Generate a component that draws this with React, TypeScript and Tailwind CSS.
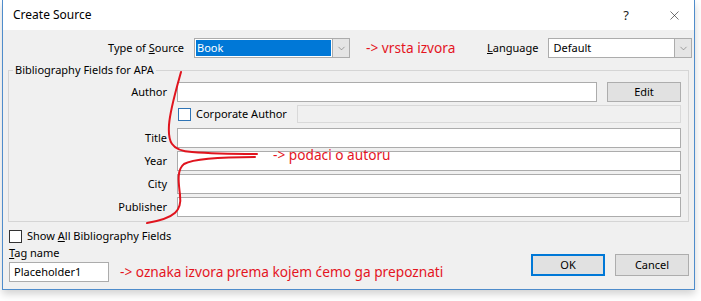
import { X, ChevronDown } from "lucide-react";

const font = { fontFamily: '"Noto Sans", "Liberation Sans", sans-serif' };

function DropArrow() {
  return (
    <div className="flex h-full w-[17px] items-center justify-center border-l border-[#acacac] bg-[#e5e5e5]">
      <ChevronDown className="h-[11px] w-[11px] text-[#606060]" strokeWidth={1.2} />
    </div>
  );
}

function TextBox({ className = "", children }: { className?: string; children?: React.ReactNode }) {
  return (
    <div className={`flex h-[20px] items-center border border-[#acacac] bg-white px-[4px] ${className}`}>
      {children}
    </div>
  );
}

function FieldRow({ label, top }: { label: string; top: string }) {
  return (
    <div className={`flex items-center ${top}`}>
      <div className="w-[159px] pr-[1px] text-right">{label}</div>
      <TextBox className="ml-[9px] w-[504px]" />
    </div>
  );
}

function CheckBox({ className = "border-[#333]" }: { className?: string }) {
  return <div className={`h-[13px] w-[13px] shrink-0 border bg-white ${className}`} />;
}

export default function App() {
  return (
    <div
      className="relative h-[301px] w-[701px] overflow-hidden bg-white text-[11px] leading-[16px] text-black"
      style={font}>
      <div className="ml-[2px] w-[693px] border-x border-b border-[#4f8ccb] shadow-[0_4px_8px_rgba(0,0,0,0.18)]">
        {/* title bar */}
        <div className="flex h-[30px] items-center bg-white pl-[10px] pr-[12px]">
          <span className="text-[12px]">Create Source</span>
          <span className="ml-auto mr-[38px] text-[13px] text-[#222]">?</span>
          <X className="h-[15px] w-[15px] text-[#222]" strokeWidth={1} />
        </div>

        {/* body */}
        <div className="h-[259px] bg-[#f0f0f0] pt-[8px]">
          <div className="flex h-[20px] items-center">
            <div className="w-[181px] text-right">
              Type of <span className="underline">S</span>ource
            </div>
            <div className="ml-[10px] flex h-[20px] w-[156px] border border-[#acacac] bg-white">
              <div className="m-[1px] flex flex-1 items-center bg-[#0078d7] pl-[1px] text-white">Book</div>
              <DropArrow />
            </div>
            <div className="ml-[16px] w-[121px] text-[13.7px] text-[#e4151f]">-&gt; vrsta izvora</div>
            <div>
              <span className="underline">L</span>anguage
            </div>
            <div className="ml-[10px] flex h-[20px] w-[144px] border border-[#acacac] bg-white">
              <div className="flex flex-1 items-center pl-[4px]">Default</div>
              <DropArrow />
            </div>
          </div>

          <fieldset className="ml-[5px] mt-[4px] w-[681px] border border-[#d5d5d5] pb-[4px]">
            <legend className="ml-[4px] px-[2px]">Bibliography Fields for APA</legend>
            <div className="flex items-center pt-[4px]">
              <div className="w-[159px] pr-[1px] text-right">Author</div>
              <TextBox className="ml-[9px] w-[420px]" />
              <div className="ml-[10px] flex h-[20px] w-[74px] items-center justify-center border border-[#adadad] bg-[#e1e1e1]">
                Edit
              </div>
            </div>
            <div className="mt-[3px] flex h-[18px] items-center">
              <div className="ml-[169px]">
                <CheckBox className="border-[#2f74b5]" />
              </div>
              <span className="ml-[5px] whitespace-nowrap">Corporate Author</span>
              <div className="ml-auto mr-[7px] h-[18px] w-[384px] border border-[#d9d9d9] bg-[#f0f0f0]" />
            </div>
            <FieldRow label="Title" top="mt-[5px]" />
            <FieldRow label="Year" top="mt-[3px]" />
            <FieldRow label="City" top="mt-[3px]" />
            <FieldRow label="Publisher" top="mt-[3px]" />
          </fieldset>

          <div className="flex items-end pl-[6px] pr-[5px]">
            <div>
              <div className="mt-[6px] flex items-center">
                <CheckBox />
                <span className="ml-[5px]">
                  Show <span className="underline">A</span>ll Bibliography Fields
                </span>
              </div>
              <div className="mt-[1px]">
                <span className="underline">T</span>ag name
              </div>
              <div className="mt-[1px] flex items-center">
                <TextBox className="w-[100px]">Placeholder1</TextBox>
                <span className="ml-[11px] text-[13.7px] text-[#e4151f]">
                  -&gt; oznaka izvora prema kojem ćemo ga prepoznati
                </span>
              </div>
            </div>
            <div className="mb-[6px] ml-auto flex gap-[10px]">
              <div className="flex h-[22px] w-[74px] items-center justify-center border-2 border-[#0078d7] bg-[#e1e1e1]">
                OK
              </div>
              <div className="flex h-[22px] w-[74px] items-center justify-center border border-[#adadad] bg-[#e1e1e1]">
                Cancel
              </div>
            </div>
          </div>
        </div>
      </div>

      {/* hand-drawn annotation */}
      <svg className="pointer-events-none absolute left-0 top-0" width="701" height="301">
        <path
          d="M181 72 C176 90, 170 110, 169 125 C168 140, 170 151, 192 152 C215 154, 240 154, 257 154"
          fill="none"
          stroke="#e0141e"
          strokeWidth="2"
          strokeLinecap="round"
        />
        <path
          d="M255 157 C230 157, 195 158, 184 164 C176 170, 179 185, 180 195 C182 210, 176 218, 147 223"
          fill="none"
          stroke="#e0141e"
          strokeWidth="2"
          strokeLinecap="round"
        />
        <text x="273" y="160" fontSize="13.7" fill="#e4151f" style={font}>
          -&gt; podaci o autoru
        </text>
      </svg>
    </div>
  );
}
